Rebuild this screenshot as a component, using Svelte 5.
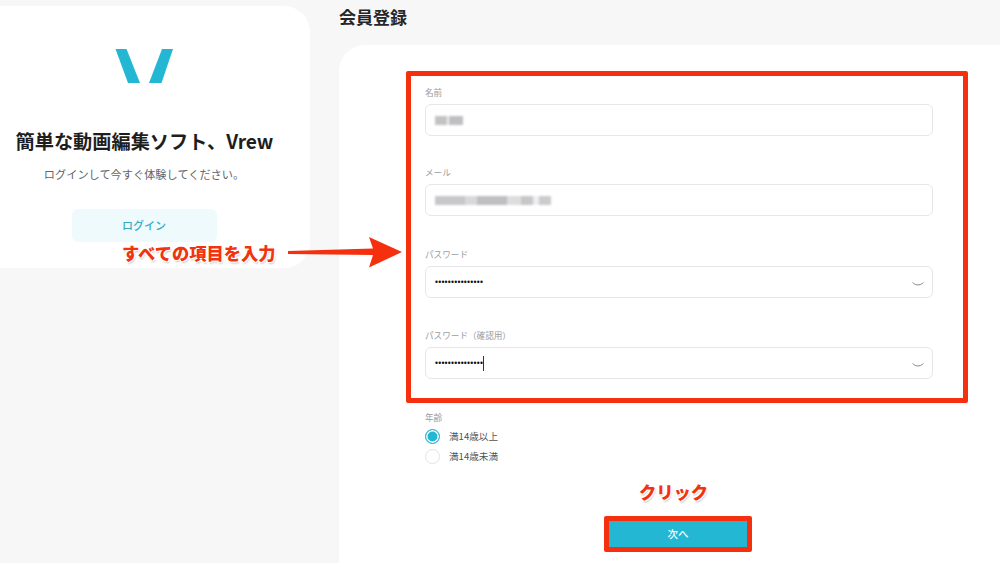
<script>
  const fields = [
    { label: '名前', kind: 'blur', segs: [[12, 0.7], [2, 0.15], [14, 0.75]] },
    { label: 'メール', kind: 'blur', segs: [[30, 0.65], [12, 0.45], [30, 0.75], [14, 0.4], [12, 0.65], [6, 0.2], [12, 0.6]] },
    { label: 'パスワード', kind: 'pw' },
    { label: 'パスワード（確認用）', kind: 'pw', caret: true }
  ];
  const dots = '•'.repeat(15);
</script>

<div class="page">
  <aside class="side">
    <svg class="logo" viewBox="0 0 58 34" width="58" height="34" aria-hidden="true">
      <path d="M0.5 0H11.5L25 34H13Z" fill="#24b7d3" />
      <path d="M47 0H58L46.5 34H34Z" fill="#24b7d3" />
    </svg>
    <h2>簡単な動画編集ソフト、Vrew</h2>
    <p>ログインして今すぐ体験してください。</p>
    <button class="login">ログイン</button>
  </aside>

  <main class="main">
    <h1>会員登録</h1>
    <section class="card">
      <form class="form">
        {#each fields as f}
          <div class="field">
            <span class="label">{f.label}</span>
            <div class="input">
              {#if f.kind === 'blur'}
                <span class="smudge">
                  {#each f.segs as s}
                    <i style="width:{s[0]}px;opacity:{s[1]}"></i>
                  {/each}
                </span>
              {:else}
                <span class="pw">{dots}</span>
                {#if f.caret}<span class="caret"></span>{/if}
                <svg class="eye" viewBox="0 0 12 6" width="12" height="6" aria-hidden="true">
                  <path d="M0.5 1.5L1.8 2.6C4 4.4 8 4.4 10.2 2.6L11.5 1.5" fill="none" stroke="#8b8b8b" stroke-width="1" />
                </svg>
              {/if}
            </div>
          </div>
        {/each}
        <div class="age">
          <span class="label">年齢</span>
          <div class="radio"><span class="dot on"></span>満14歳以上</div>
          <div class="radio"><span class="dot"></span>満14歳未満</div>
        </div>
        <button class="next" type="button">次へ</button>
      </form>
    </section>
  </main>

  <div class="box box-form"></div>
  <div class="box box-next"></div>
  <span class="note note-all">すべての項目を入力</span>
  <span class="note note-click">クリック</span>
  <svg class="arrow" viewBox="0 0 114 31" width="114" height="31" aria-hidden="true">
    <path d="M0 14L85 11.5L81 0L114 15L81 30.5L85 18L0 17Z" fill="#f5300f" />
  </svg>
</div>

<style>
  :global(body) {
    margin: 0;
    background: #f7f7f7;
  }
  .page {
    position: relative;
    width: 1000px;
    height: 563px;
    overflow: hidden;
    display: grid;
    grid-template-columns: 310px 1fr;
    column-gap: 29px;
    background: #f7f7f7;
    font-family: "Noto Sans CJK JP", "Noto Sans", sans-serif;
    color: #1d1d1f;
  }
  .side {
    align-self: start;
    margin-top: 6px;
    height: 262px;
    box-sizing: border-box;
    padding-top: 43px;
    background: #fff;
    border-radius: 0 26px 26px 0;
    display: flex;
    flex-direction: column;
    align-items: center;
  }
  .logo {
    margin-left: -22px;
    display: block;
  }
  .side h2 {
    margin: 45px 0 0 -21px;
    font-size: 19.2px;
    line-height: 26px;
    font-weight: 700;
    color: #1e1e20;
    white-space: nowrap;
  }
  .side p {
    margin: 12px 0 0 -22px;
    font-size: 11.2px;
    line-height: 16px;
    color: #606469;
  }
  .login {
    margin: 27px 0 0 -22px;
    width: 145px;
    height: 33px;
    border: 0;
    border-radius: 6px;
    padding: 0 0 2px;
    background: #eefafc;
    color: #35adc6;
    font: 500 11px "Noto Sans CJK JP", sans-serif;
  }
  .main {
    display: flex;
    flex-direction: column;
    min-width: 0;
  }
  h1 {
    margin: 0;
    height: 45px;
    padding-top: 5px;
    box-sizing: border-box;
    font-size: 17px;
    line-height: 24px;
    font-weight: 700;
    color: #26262a;
  }
  .card {
    flex: 1;
    background: #fff;
    border-top-left-radius: 26px;
    padding: 40px 0 0 86px;
  }
  .form {
    width: 508px;
    display: flex;
    flex-direction: column;
  }
  .field {
    height: 81px;
    display: flex;
    flex-direction: column;
  }
  .field:first-child {
    height: 80px;
  }
  .field:nth-child(2) {
    height: 82px;
  }
  .label {
    box-sizing: border-box;
    padding-top: 1px;
    font-size: 8.6px;
    line-height: 13px;
    height: 19px;
    color: #9a9da1;
    white-space: nowrap;
  }
  .input {
    position: relative;
    height: 32px;
    box-sizing: border-box;
    border: 1px solid #e6e7e9;
    border-radius: 6px;
    display: flex;
    align-items: center;
    padding-left: 9px;
    background: #fff;
  }
  .smudge {
    display: flex;
    height: 9px;
    margin-top: 1px;
    filter: blur(1.3px);
  }
  .smudge i {
    display: block;
    height: 100%;
    background: #a9a9ad;
  }
  .pw {
    font: 8.5px/10px "Liberation Sans", sans-serif;
    color: #111;
    letter-spacing: 0.23px;
  }
  .caret {
    width: 1px;
    height: 15px;
    background: #30343a;
  }
  .eye {
    position: absolute;
    right: 8px;
    top: 14px;
  }
  .age {
    margin-top: 1px;
    display: flex;
    flex-direction: column;
  }
  .age .label {
    height: 16px;
  }
  .radio {
    display: flex;
    align-items: center;
    gap: 9px;
    height: 20px;
    font-size: 9.6px;
    color: #4f5256;
  }
  .dot {
    width: 15px;
    height: 15px;
    box-sizing: border-box;
    border: 1px solid #e2e3e5;
    border-radius: 50%;
    background: #fff;
  }
  .dot.on {
    border-color: #2cb6d0;
    background: #24b7d3;
    box-shadow: inset 0 0 0 1.5px #fff;
  }
  .next {
    align-self: flex-start;
    margin: 52px 0 0 183px;
    width: 140px;
    height: 30px;
    border: 0;
    background: #24b7d3;
    color: #fff;
    font: 500 10.5px "Noto Sans CJK JP", sans-serif;
  }
  .box {
    position: absolute;
    box-sizing: border-box;
    border: 5px solid #f5300f;
    border-radius: 2px;
  }
  .box-form {
    left: 406px;
    top: 71px;
    width: 562px;
    height: 332px;
  }
  .box-next {
    left: 604px;
    top: 516px;
    width: 148px;
    height: 36px;
  }
  .note {
    position: absolute;
    font-weight: 900;
    color: #f0340f;
    white-space: nowrap;
    text-shadow: 0 0 1px #fff, 1px 1px 1px #fff, -1px -1px 1px #fff, 1px -1px 1px #fff, -1px 1px 1px #fff, 1px 2px 2px rgba(0, 0, 0, 0.25);
  }
  .note-all {
    left: 122px;
    top: 241px;
    font-size: 17.3px;
    line-height: 24px;
  }
  .note-click {
    left: 639px;
    top: 480px;
    font-size: 17.3px;
    line-height: 24px;
  }
  .arrow {
    position: absolute;
    left: 288px;
    top: 237px;
  }
</style>
